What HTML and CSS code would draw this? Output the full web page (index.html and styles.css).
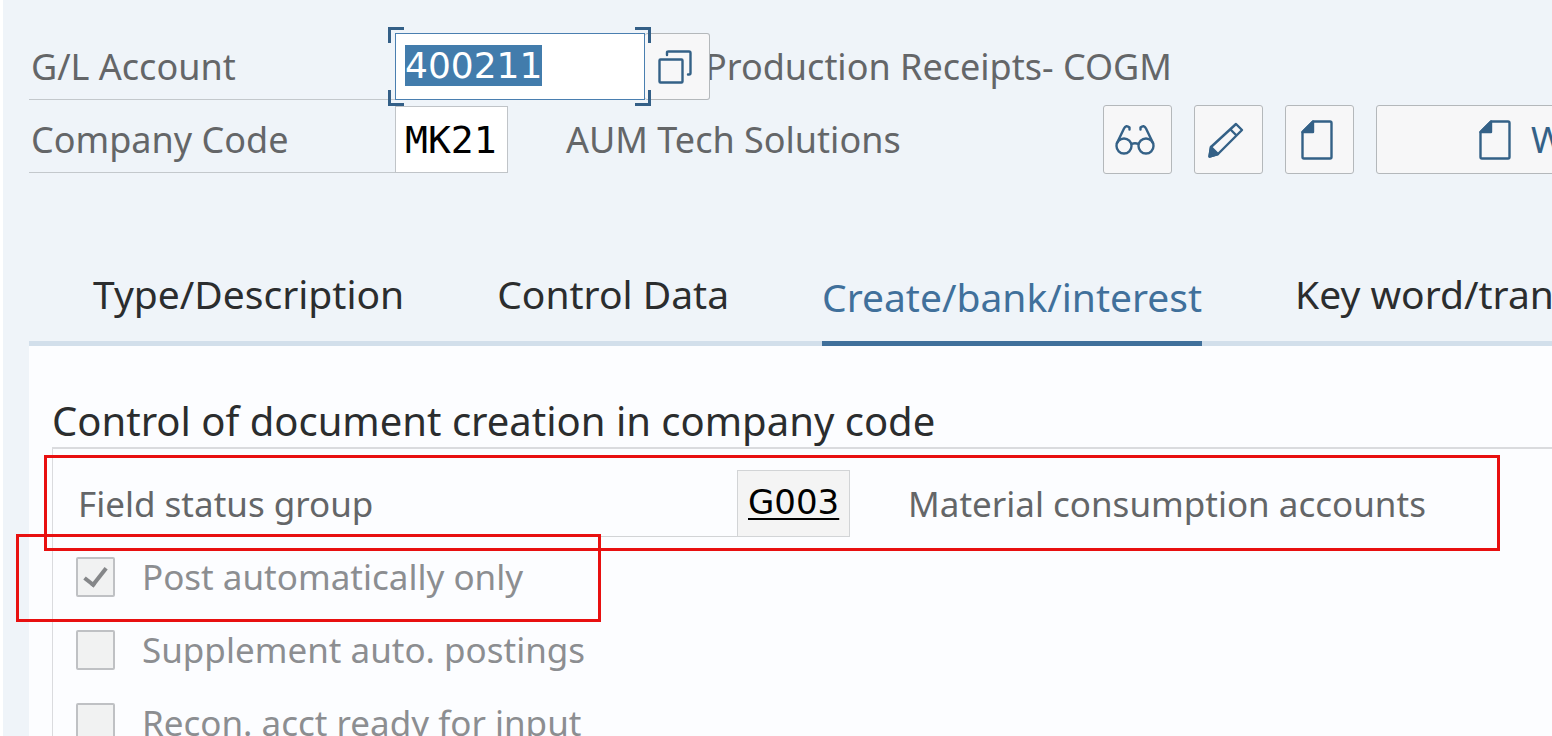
FILE: index.html
```
<!DOCTYPE html>
<html lang="en">
<head>
  <meta charset="UTF-8" />
  <meta name="viewport" content="width=device-width, initial-scale=1" />
  <title>G/L Account - Company Code Data</title>
  <link rel="stylesheet" href="styles.css">
</head>
<body>
  <!-- Account header -->
  <header class="header">
    <div class="row">
      <label class="label" for="account">G/L Account</label>
      <div class="field focused">
        <input class="input account" id="account" type="text" value="400211" autofocus>
      </div>
      <button class="btn value-help" type="button" aria-label="Value help">
        <svg class="icon" width="34" height="34" viewBox="0 0 34 34">
          <rect x="1.5" y="9.5" width="23" height="23" rx="1"/>
          <path d="M9 5V2.500Q9 1.500 10.500 1.500H31Q32.500 1.500 32.500 3V23Q32.500 24.500 31 24.500H30"/>
        </svg>
      </button>
      <span class="description covered">Production Receipts- COGM</span>
    </div>

    <div class="row">
      <label class="label" for="company">Company Code</label>
      <input class="input code" id="company" type="text" value="MK21">
      <span class="description">AUM Tech Solutions</span>
      <div class="toolbar">
        <button class="btn" type="button" aria-label="Display">
          <svg class="icon" width="40" height="32" viewBox="0 0 40 32">
            <circle cx="9" cy="22" r="7.500"/>
            <circle cx="31" cy="22" r="7.500"/>
            <path d="M16.500 20Q20 18.500 23.500 20M2 19L9 4.500Q11 .500 14.500 3.500V5.500M38 19L31 4.500Q29 .500 25.500 3.500V5.500"/>
          </svg>
        </button>
        <button class="btn" type="button" aria-label="Change">
          <svg class="icon" width="36" height="36" viewBox="0 0 36 36">
            <path d="M3 25L28 2L34 8L10 32L1.500 34.500ZM22.500 7.500L28.500 13.500"/>
            <path class="solid" d="M3 25L10 32L1.500 34.500Z"/>
          </svg>
        </button>
        <button class="btn" type="button" aria-label="Create">
          <svg class="icon" width="32" height="40" viewBox="0 0 32 40">
            <path d="M12 1.500H29Q30.500 1.500 30.500 3V37Q30.500 38.500 29 38.500H3Q1.500 38.500 1.500 37V12Z"/>
            <path class="solid" d="M12 1.500V12H1.500Z"/>
          </svg>
        </button>
        <button class="btn wide" type="button">
          <svg class="icon" width="32" height="40" viewBox="0 0 32 40">
            <path d="M12 1.500H29Q30.500 1.500 30.500 3V37Q30.500 38.500 29 38.500H3Q1.500 38.500 1.500 37V12Z"/>
            <path class="solid" d="M12 1.500V12H1.500Z"/>
          </svg>
          W
        </button>
      </div>
    </div>
  </header>

  <!-- Tabs -->
  <nav class="tabs">
    <a class="tab" href="#type">Type/Description</a>
    <a class="tab" href="#control">Control Data</a>
    <a class="tab active" href="#create">Create/bank/interest</a>
    <a class="tab" href="#keyword">Key word/tran</a>
  </nav>

  <!-- Tab content -->
  <main class="panel">
    <h2 class="group-title">Control of document creation in company code</h2>
    <section class="group">
      <div class="row marked marked-status">
        <label class="label status-label" for="status">Field status group</label>
        <input class="input code readonly" id="status" type="text" value="G003" readonly>
        <span class="description">Material consumption accounts</span>
      </div>
      <div class="row marked marked-post">
        <input class="checkbox" id="post" type="checkbox" checked disabled>
        <label class="check-label" for="post">Post automatically only</label>
      </div>
      <div class="row">
        <input class="checkbox" id="supplement" type="checkbox" disabled>
        <label class="check-label" for="supplement">Supplement auto. postings</label>
      </div>
      <div class="row">
        <input class="checkbox" id="recon" type="checkbox" disabled>
        <label class="check-label" for="recon">Recon. acct ready for input</label>
      </div>
    </section>
  </main>

  <script>
    // Select the account number so it can be overwritten right away
    const account = document.getElementById('account');
    account.focus();
    account.select();
  </script>
</body>
</html>
```

FILE: styles.css
```
*,
*::before,
*::after {
  margin: 0;
  padding: 0;
  box-sizing: border-box;
}

body {
  font-family: 'Noto Sans', sans-serif;
  font-size: 36px;
  line-height: 48px;
  color: #646668;
  background: #eff4f9;
  border-left: 3px solid #fff;
  height: 100vh;
  padding-left: 26px;
  overflow: hidden;
  white-space: nowrap;
}

/* Rows */
.header {
  padding-top: 33px;
}

.row {
  display: flex;
  align-items: center;
  height: 67px;
  margin-bottom: 6px;
  position: relative;
}

.label {
  flex: none;
  width: 366px;
  height: 67px;
  padding: 10px 0 0 2px;
  border-bottom: 1px solid #c3c8cc;
}

.description {
  margin-left: 58px;
}

.description.covered {
  margin-left: -5px;
}

/* Fields */
.field {
  position: relative;
  width: 250px;
  height: 67px;
}

.input {
  display: block;
  height: 67px;
  padding: 0 9px;
  border: 1px solid #c0c4c8;
  background: #fff;
  color: #000;
  font-family: 'DejaVu Sans Mono', monospace;
  font-size: 38px;
  outline: none;
}

.input.code {
  flex: none;
  width: 113px;
}

.input.account {
  width: 100%;
  padding-bottom: 3px;
  border-color: #4a7fb0;
  font-family: 'DejaVu Sans', sans-serif;
  font-size: 36px;
}

.input.account::selection {
  background: #427cac;
  color: #fff;
}

.input.readonly {
  padding: 0 9px 4px 10px;
  background: #f4f4f4;
  border-color: #d2d4d6;
  font-family: 'DejaVu Sans', sans-serif;
  font-size: 34px;
  text-decoration: underline;
  text-decoration-thickness: 2px;
  text-underline-offset: 4px;
}

/* Corner marks round the focused field */
.focused::before {
  content: '';
  position: absolute;
  inset: -6px -6px -6px -7px;
  z-index: 2;
  pointer-events: none;
  --mark: linear-gradient(#335f87, #335f87);
  background:
    var(--mark) left top / 16px 3px,
    var(--mark) left top / 3px 16px,
    var(--mark) right top / 16px 3px,
    var(--mark) right top / 3px 16px,
    var(--mark) left bottom / 16px 3px,
    var(--mark) left bottom / 3px 16px,
    var(--mark) right bottom / 16px 3px,
    var(--mark) right bottom / 3px 16px;
  background-repeat: no-repeat;
}

/* Buttons */
.btn {
  flex: none;
  display: flex;
  align-items: center;
  justify-content: center;
  width: 69px;
  height: 69px;
  padding-right: 5px;
  border: 1px solid #b4b8bb;
  border-radius: 3px;
  background: #f7f7f8;
  color: #346187;
  font: inherit;
}

.btn.value-help {
  position: relative;
  z-index: 1;
  width: 65px;
  height: 67px;
  border-left: none;
}

.btn.wide {
  width: 320px;
  justify-content: flex-start;
  gap: 20px;
  padding-left: 102px;
}

.icon {
  flex: none;
  fill: none;
  stroke: #346187;
  stroke-width: 2.4;
  stroke-linecap: round;
  stroke-linejoin: round;
}

.icon .solid {
  fill: #346187;
}

.toolbar {
  display: flex;
  gap: 22px;
  margin-left: auto;
  margin-right: -144px;
}

/* Tabs */
.tabs {
  display: flex;
  gap: 93px;
  margin-top: 73px;
  padding-left: 64px;
  border-bottom: 5px solid #d2dfeb;
  font-size: 39px;
}

.tab {
  height: 95px;
  padding-top: 24px;
  color: #2b2d2e;
  text-decoration: none;
}

.tab.active {
  height: 100px;
  margin-bottom: -5px;
  padding-top: 27px;
  border-bottom: 5px solid #40709b;
  color: #40709b;
}

/* Tab content */
.panel {
  background: #fcfdff;
  padding: 48px 0 0 23px;
  font-size: 35px;
}

.group-title {
  color: #2b2d2e;
  font-size: 40px;
  font-weight: 400;
  line-height: 53px;
}

.group {
  border: solid #dadbde;
  border-width: 2px 0 0 1px;
  padding: 21px 0 0 23px;
}

.status-label {
  width: 661px;
  border-color: #d2d4d6;
}

.checkbox {
  appearance: none;
  flex: none;
  width: 39px;
  height: 40px;
  border: 2px solid #bfc1c4;
  border-radius: 2px;
  background: #f1f2f2;
  display: flex;
  justify-content: center;
}

.checkbox:checked::after {
  content: '';
  width: 13px;
  height: 23px;
  margin-top: 4px;
  border: solid #858789;
  border-width: 0 4px 4px 0;
  transform: rotate(38deg);
}

.check-label {
  margin-left: 27px;
  color: #8c8e91;
}

/* Red marker frames */
.marked::after {
  content: '';
  position: absolute;
  border: 3px solid #e81010;
  pointer-events: none;
}

.marked-status::after {
  inset: -15px 52px -14px -32px;
}

.marked-post::after {
  top: -9px;
  bottom: -12px;
  left: -60px;
  width: 585px;
}
```
